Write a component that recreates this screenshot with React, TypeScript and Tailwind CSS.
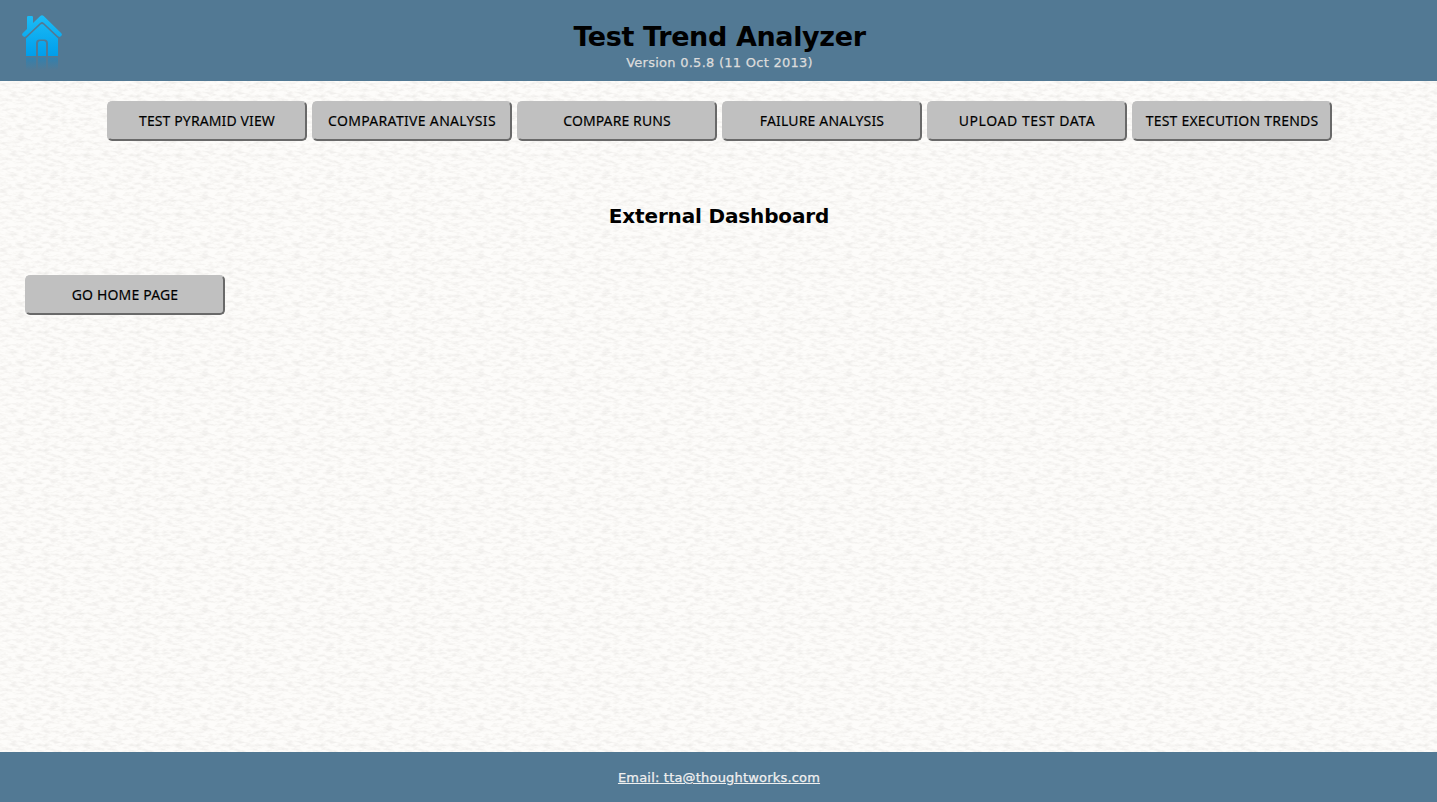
import React from "react";

const navItems = [
  { label: "TEST PYRAMID VIEW", tracking: "tracking-[0.12px]" },
  { label: "COMPARATIVE ANALYSIS", tracking: "tracking-[0.32px]" },
  { label: "COMPARE RUNS", tracking: "tracking-[0.1px]" },
  { label: "FAILURE ANALYSIS", tracking: "tracking-[0.17px]" },
  { label: "UPLOAD TEST DATA", tracking: "tracking-[0.55px]" },
  { label: "TEST EXECUTION TRENDS", tracking: "tracking-[0.22px]" },
];

function PaperTexture() {
  return (
    <svg className="absolute inset-0 h-full w-full" aria-hidden="true">
      <defs>
        <filter id="paper" x="0" y="0" width="92" height="59" filterUnits="userSpaceOnUse" colorInterpolationFilters="sRGB">
          <feTurbulence type="fractalNoise" baseFrequency="0.12 0.3" numOctaves="3" seed="21" stitchTiles="stitch" />
          <feColorMatrix type="matrix" values="0 0 0 0 0.72  0 0 0 0 0.7  0 0 0 0 0.67  0.5 0 0 0 -0.21" />
        </filter>
        <pattern id="paperTile" width="92" height="59" patternUnits="userSpaceOnUse">
          <rect width="92" height="59" filter="url(#paper)" />
        </pattern>
      </defs>
      <rect width="100%" height="100%" fill="url(#paperTile)" />
    </svg>
  );
}

function HomeIcon() {
  return (
    <svg width="42" height="56" viewBox="0 0 42 56" aria-hidden="true">
      <defs>
        <linearGradient id="house" gradientUnits="userSpaceOnUse" x1="0" y1="0" x2="0" y2="41">
          <stop offset="0" stopColor="#1cbcf6" />
          <stop offset="1" stopColor="#009eeb" />
        </linearGradient>
        <linearGradient id="reflection" x1="0" y1="0" x2="0" y2="1">
          <stop offset="0" stopColor="#1d86c0" stopOpacity="0.6" />
          <stop offset="1" stopColor="#1d86c0" stopOpacity="0" />
        </linearGradient>
      </defs>
      <path
        fill="url(#house)"
        d="M6 2.2Q6 1 7.2 1H10.8Q12 1 12 2.2V8L19.3 1Q21-.6 22.7 1L40.3 18.2Q41.5 19.5 40.3 20.8Q38.7 22.8 36.8 21.1L22.7 7.8Q21 6.2 19.3 7.8L5.2 21.1Q3.3 22.8 1.7 20.8Q.5 19.5 1.7 18.2L6 14Z"
      />
      <path
        fill="url(#house)"
        d="M5 23.4L19.7 9.5Q21 8.3 22.3 9.5L37 23.4V41H27V28.5Q27 24.5 23.5 24.5H18.5Q15 24.5 15 28.5V41H5Z"
      />
      <path fill="url(#house)" d="M17 41V28.5Q17 26 19.5 26H22.5Q25 26 25 28.5V41Z" />
      <path fill="url(#reflection)" d="M5 42.5H15V55H5ZM17 42.5H25V55H17ZM27 42.5H37V55H27Z" />
    </svg>
  );
}

function GrayButton({ label, tracking }: { label: string; tracking: string }) {
  return (
    <button
      type="button"
      className={`h-10 w-[200px] shrink-0 rounded-[5px] border-2 border-t-[#c0c0c0] border-r-[#696969] border-b-[#696969] border-l-[#c0c0c0] bg-[#c0c0c0] font-['Noto_Sans',sans-serif] text-[14px] leading-[20px] whitespace-nowrap text-black [-webkit-text-stroke:0.15px] ${tracking}`}
    >
      {label}
    </button>
  );
}

export default function App() {
  return (
    <div className="relative isolate flex h-[802px] w-full flex-col overflow-hidden bg-[#fdfcfa] font-['DejaVu_Sans',Verdana,sans-serif]">
      <div className="absolute inset-0 -z-10">
        <PaperTexture />
      </div>
      <header className="grid h-[81px] shrink-0 grid-cols-[100px_1fr_100px] bg-[#527994]">
        <a href="#" className="pt-[15px] pl-[21px]">
          <HomeIcon />
        </a>
        <div className="flex flex-col items-center pt-[20px] pl-[2px]">
          <h1 className="text-[27px] leading-[34px] font-bold tracking-[-0.36px] whitespace-nowrap text-black">Test Trend Analyzer</h1>
          <p className="pt-px text-[13px] leading-[16px] tracking-[0.26px] whitespace-nowrap text-[#dcdcdc] [-webkit-text-stroke:0.25px]">Version 0.5.8 (11 Oct 2013)</p>
        </div>
      </header>
      <nav className="flex justify-center gap-[5px] pt-5 pl-[2px]">
        {navItems.map((item) => (
          <GrayButton key={item.label} label={item.label} tracking={item.tracking} />
        ))}
      </nav>
      <main className="flex-1">
        <h2 className="mt-[61px] pl-px text-center text-[20px] leading-[28px] font-bold tracking-[-0.15px] text-black">External Dashboard</h2>
        <div className="mt-[45px] pl-[25px]">
          <GrayButton label="GO HOME PAGE" tracking="tracking-[0.17px]" />
        </div>
      </main>
      <footer className="flex h-[50px] shrink-0 items-center justify-center bg-[#527994] pt-[2px] pl-px">
        <a href="#" className="text-[13px] leading-[16px] tracking-[0.19px] text-[#f0f0f0] underline [-webkit-text-stroke:0.25px]">
          Email: tta@thoughtworks.com
        </a>
      </footer>
    </div>
  );
}
